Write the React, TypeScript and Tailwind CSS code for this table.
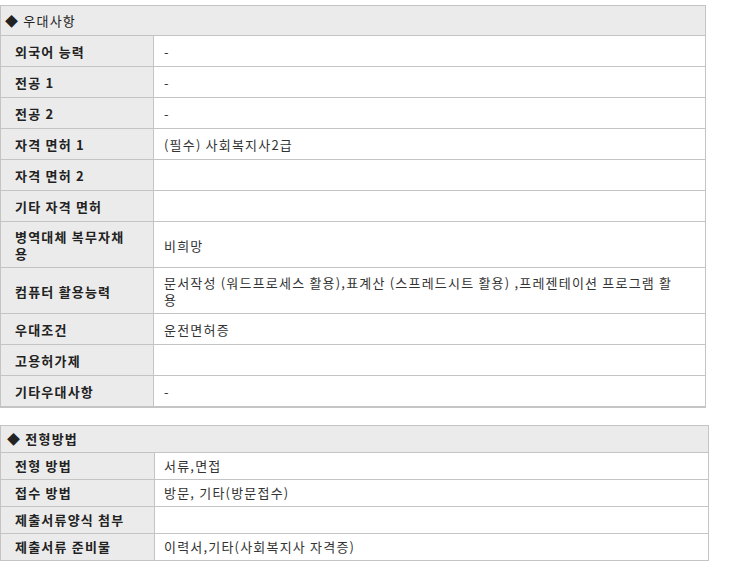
const font = { fontFamily: '"Noto Sans CJK KR", "Noto Sans", sans-serif' };

type Row = { label: string; value: string };

const benefits: Row[] = [
  { label: '외국어 능력', value: '-' },
  { label: '전공 1', value: '-' },
  { label: '전공 2', value: '-' },
  { label: '자격 면허 1', value: '(필수) 사회복지사2급' },
  { label: '자격 면허 2', value: '' },
  { label: '기타 자격 면허', value: '' },
  { label: '병역대체 복무자채용', value: '비희망' },
  {
    label: '컴퓨터 활용능력',
    value: '문서작성 (워드프로세스 활용),표계산 (스프레드시트 활용)  ,프레젠테이션 프로그램 활용',
  },
  { label: '우대조건', value: '운전면허증' },
  { label: '고용허가제', value: '' },
  { label: '기타우대사항', value: '-' },
];

const selection: Row[] = [
  { label: '전형 방법', value: '서류,면접' },
  { label: '접수 방법', value: '방문, 기타(방문접수)' },
  { label: '제출서류양식 첨부', value: '' },
  { label: '제출서류 준비물', value: '이력서,기타(사회복지사 자격증)' },
];

export default function App() {
  return (
    <div
      className="bg-white w-[732px] h-[568px] pt-[5px] text-[13px] tracking-[1.2px] text-[#333]"
      style={font}
    >
      <table className="w-[706px] border-collapse border border-[#c4c4c4] border-b-2 table-fixed">
        <colgroup>
          <col className="w-[153px]" />
          <col />
        </colgroup>
        <thead>
          <tr className="bg-[#ebebeb]">
            <th colSpan={2} className="h-[30px] p-0 pl-[4px] text-left font-normal text-[#222] leading-[17px]">
              ◆ 우대사항
            </th>
          </tr>
        </thead>
        <tbody>
          {benefits.map((r) => (
            <tr key={r.label}>
              <td className="border border-[#c4c4c4] bg-[#ebebeb] pl-[14px] pr-[20px] pt-[6px] pb-[5px] h-[31px] font-bold text-[#222] leading-[17px] break-all">
                {r.label}
              </td>
              <td className="border border-[#c4c4c4] pl-[10px] pr-[22px] pt-[6px] pb-[5px] leading-[17px] break-all">
                {r.value}
              </td>
            </tr>
          ))}
        </tbody>
      </table>

      <table className="mt-[17px] w-[709px] border-collapse border border-[#c4c4c4] table-fixed">
        <colgroup>
          <col className="w-[154px]" />
          <col />
        </colgroup>
        <thead>
          <tr className="bg-[#ebebeb]">
            <th colSpan={2} className="h-[27px] p-0 pl-[6px] text-left font-bold text-[#222] leading-[17px]">
              ◆ 전형방법
            </th>
          </tr>
        </thead>
        <tbody>
          {selection.map((r) => (
            <tr key={r.label}>
              <td className="border border-[#c4c4c4] bg-[#ebebeb] pl-[14px] py-[4px] h-[27px] font-bold text-[#222] leading-[17px]">
                {r.label}
              </td>
              <td className="border border-[#c4c4c4] pl-[9px] py-[4px] leading-[17px]">{r.value}</td>
            </tr>
          ))}
        </tbody>
      </table>
    </div>
  );
}
